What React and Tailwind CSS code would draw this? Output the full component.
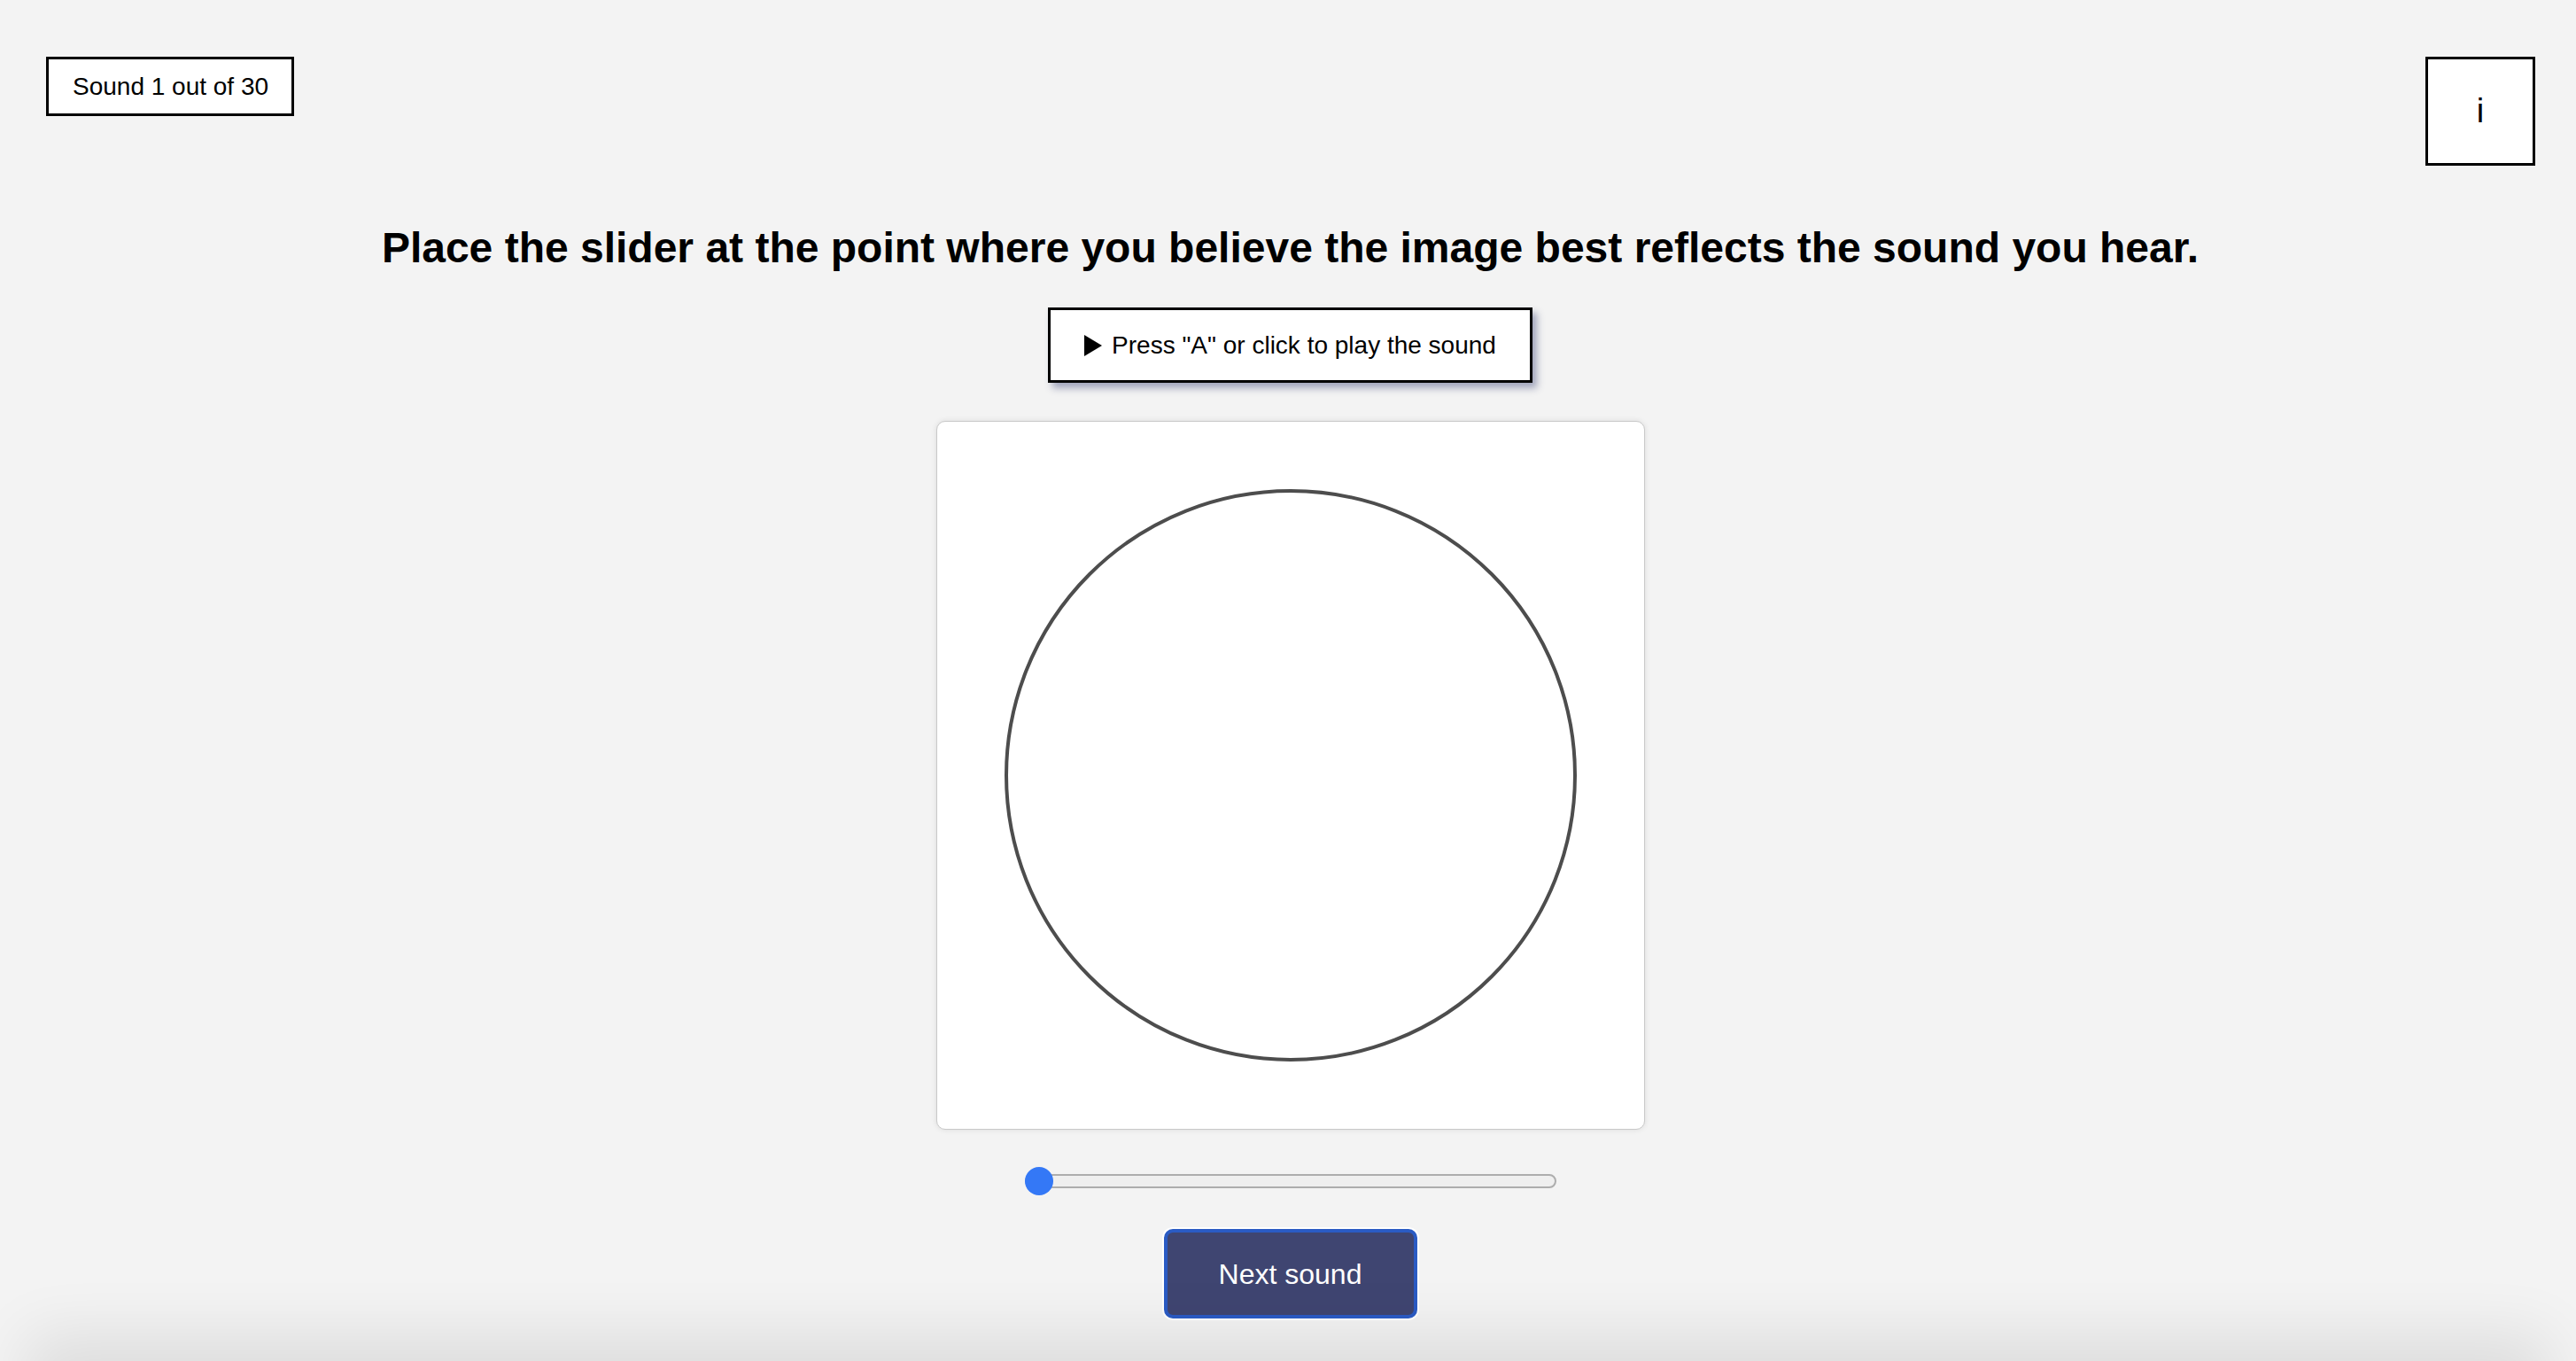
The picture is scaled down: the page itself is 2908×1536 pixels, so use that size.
import React, { useState } from 'react';

const font = { fontFamily: '"Liberation Sans", Arial, sans-serif' };

const Slider = ({ value }) => (
  <div className="relative w-[600px] h-8 flex items-center">
    <div className="w-full h-4 rounded-full border-2 border-[#adadad] bg-[#efefef]" />
    {/* thumb */}
    <div
      className="absolute top-0 w-8 h-8 rounded-full bg-[#3478f6]"
      style={{ left: `${value * (600 - 32)}px` }}
    />
  </div>
);

const App = () => {
  const [value] = useState(0);

  return (
    <div className="relative min-h-[1536px] bg-[#f3f3f3] text-black overflow-hidden" style={font}>
      {/* Top bar */}
      <div className="flex items-start justify-between pt-16 pl-[52px] pr-[46px]">
        <div className="border-[3px] border-black bg-white pl-[27px] pr-[26px] py-[14px] text-[28px] leading-[33px]">
          Sound 1 out of 30
        </div>
        <button className="w-[124px] h-[123px] border-[3px] border-black bg-white flex items-center justify-center text-[38px]">
          i
        </button>
      </div>

      {/* Main column */}
      <div className="flex flex-col items-center pl-[5px]">
        <h1 className="mt-[65px] text-[48px] leading-[55px] font-bold">
          Place the slider at the point where you believe the image best reflects the sound you hear.
        </h1>

        <button className="mt-10 w-[547px] h-[85px] border-[3px] border-black bg-white flex items-center justify-center gap-[11px] text-[28px] shadow-[5px_6px_8px_rgba(60,68,120,0.45)]">
          <svg width="20" height="24" viewBox="0 0 20 24">
            <polygon points="0,0 20,12 0,24" fill="black" />
          </svg>
          <span>Press "A" or click to play the sound</span>
        </button>

        <div className="mt-[43px] w-[800px] h-[800px] bg-white border border-[#c9c9c9] rounded-[10px] shadow-[0_0_6px_rgba(0,0,0,0.1)]">
          <svg width="798" height="798" viewBox="0 0 798 798">
            <circle cx="399" cy="399" r="321" fill="none" stroke="#4d4d4d" strokeWidth="4" />
          </svg>
        </div>

        <div className="mt-[42px]">
          <Slider value={value} />
        </div>

        <button className="mt-[38px] w-[286px] h-[101px] rounded-[10px] border-4 border-[#2a5bc4] bg-[#3f4571] text-white text-[32px] shadow-[0_0_0_2px_#ffffff]">
          Next sound
        </button>
      </div>

      {/* bottom shade */}
      <div className="absolute left-[60px] right-[60px] bottom-[-50px] h-[50px] shadow-[0_0_70px_30px_rgba(0,0,0,0.09)]" />
    </div>
  );
};

export default App;
